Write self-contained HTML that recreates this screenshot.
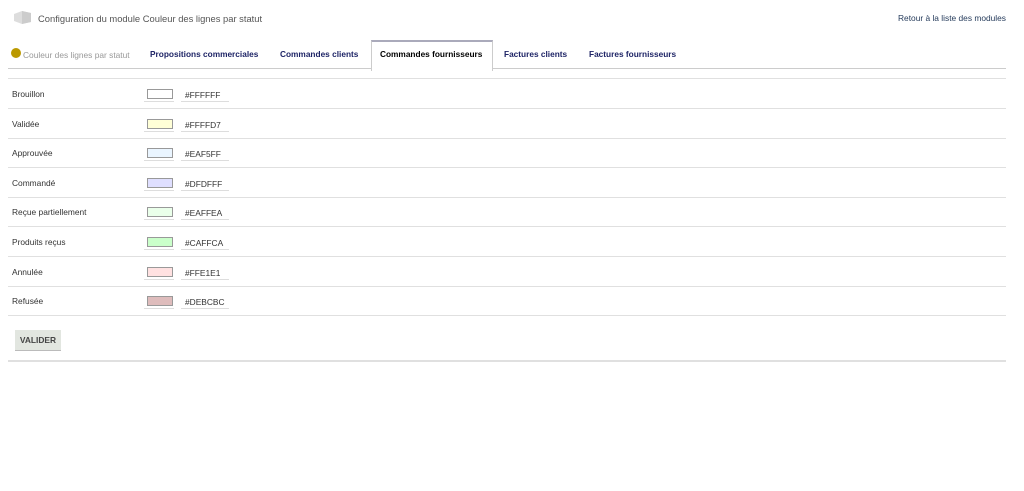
<!DOCTYPE html>
<html><head><meta charset="utf-8"><style>
body{margin:0;width:1024px;height:491px;background:#fff;font-family:"Liberation Sans",sans-serif;font-size:8.4px;color:#333;position:relative;overflow:hidden}
.a{position:absolute}
.tab{position:absolute;top:41px;height:27px;line-height:27px;font-weight:bold;color:#1e2466;font-size:8.3px}
.row{position:absolute;left:8px;width:998px;height:29px;border-bottom:1px solid #e0e0e0}
.row .l{position:absolute;left:4px;top:10px}
.row .sw{position:absolute;left:139px;top:10px;width:24px;height:8px;border:1px solid #999}
.row .u1{position:absolute;left:136px;top:22px;width:30px;border-bottom:1px solid #ddd}
.row .h{position:absolute;left:177px;top:11px}
.row .u2{position:absolute;left:173px;top:22px;width:48px;border-bottom:1px solid #ddd}
</style></head><body>
<svg class="a" style="left:12px;top:9px" width="20" height="16"><path d="M2 5 L10 2 L19 4 L19 13 L10 15 L2 12Z" fill="#ddd"/><path d="M10 2 L19 4 L19 13 L10 15Z" fill="#ccc"/></svg>
<div class="a" style="left:38px;top:13px;font-size:9.4px;color:#555">Configuration du module Couleur des lignes par statut</div>
<div class="a" style="right:18px;top:13px;color:#263c5c">Retour à la liste des modules</div>
<div class="a" style="left:11px;top:48px;width:10px;height:10px;border-radius:50%;background:#bb9900"></div>
<div class="a" style="left:23px;top:50px;color:#999">Couleur des lignes par statut</div>
<div class="tab" style="left:150px">Propositions commerciales</div>
<div class="tab" style="left:280px">Commandes clients</div>
<div class="a" style="left:371px;top:40px;width:120px;height:29px;border:1px solid #ccc;border-top:2px solid #aab;border-bottom:none;background:#fff;z-index:2"></div>
<div class="tab" style="left:380px;color:#000;z-index:3">Commandes fournisseurs</div>
<div class="tab" style="left:504px">Factures clients</div>
<div class="tab" style="left:589px">Factures fournisseurs</div>
<div class="a" style="left:8px;top:68px;width:998px;border-bottom:1px solid #ccc"></div>
<div class="a" style="left:8px;top:78px;width:998px;border-bottom:1px solid #e0e0e0"></div>
<div class="row" style="top:79px"><span class="l">Brouillon</span><span class="sw" style="background:#FFFFFF"></span><span class="u1"></span><span class="h">#FFFFFF</span><span class="u2"></span></div>
<div class="row" style="top:109px"><span class="l">Validée</span><span class="sw" style="background:#FFFFD7"></span><span class="u1"></span><span class="h">#FFFFD7</span><span class="u2"></span></div>
<div class="row" style="top:138px"><span class="l">Approuvée</span><span class="sw" style="background:#EAF5FF"></span><span class="u1"></span><span class="h">#EAF5FF</span><span class="u2"></span></div>
<div class="row" style="top:168px"><span class="l">Commandé</span><span class="sw" style="background:#DFDFFF"></span><span class="u1"></span><span class="h">#DFDFFF</span><span class="u2"></span></div>
<div class="row" style="top:197px"><span class="l">Reçue partiellement</span><span class="sw" style="background:#EAFFEA"></span><span class="u1"></span><span class="h">#EAFFEA</span><span class="u2"></span></div>
<div class="row" style="top:227px"><span class="l">Produits reçus</span><span class="sw" style="background:#CAFFCA"></span><span class="u1"></span><span class="h">#CAFFCA</span><span class="u2"></span></div>
<div class="row" style="top:257px"><span class="l">Annulée</span><span class="sw" style="background:#FFE1E1"></span><span class="u1"></span><span class="h">#FFE1E1</span><span class="u2"></span></div>
<div class="row" style="top:286px"><span class="l">Refusée</span><span class="sw" style="background:#DEBCBC"></span><span class="u1"></span><span class="h">#DEBCBC</span><span class="u2"></span></div>
<div class="a" style="left:15px;top:330px;width:46px;height:20px;background:#e2e6e0;border-bottom:1px solid #bbb;line-height:20px;text-align:center;font-weight:bold;color:#444">VALIDER</div>
<div class="a" style="left:8px;top:360px;width:998px;border-bottom:2px solid #e0e0e0"></div>
</body></html>
